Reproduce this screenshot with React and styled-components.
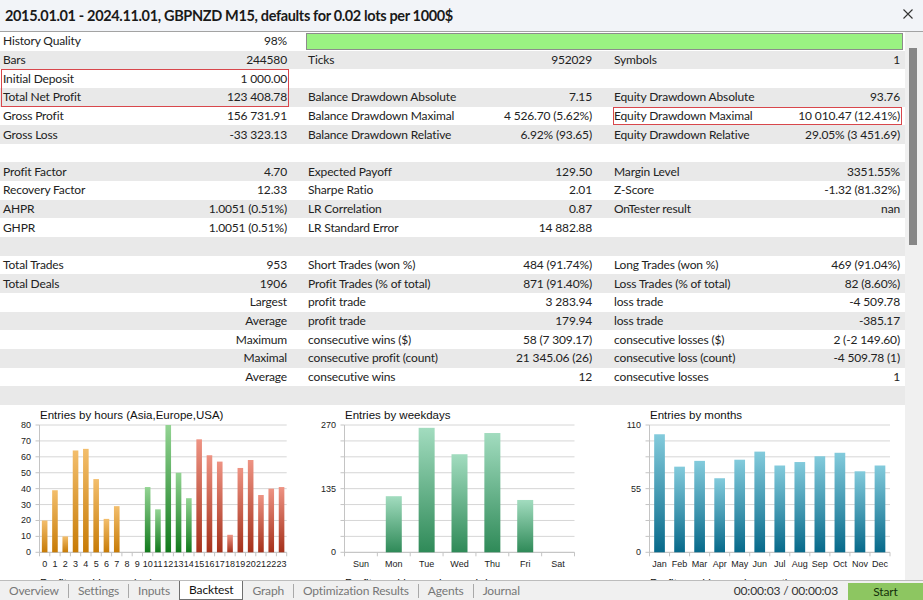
import React from 'react';
import styled, { createGlobalStyle } from 'styled-components';

const Global = createGlobalStyle`
  html, body { margin: 0; padding: 0; background: #fff; }
  body { width: 923px; height: 600px; overflow: hidden; font-family: Lato, "Noto Sans", sans-serif; }
  * { box-sizing: border-box; }
`;

const RED = '#d8474c';

const Window     = styled.div`
  width: 923px; height: 600px; display: flex; flex-direction: column;
  background: #fff; color: #222;
`;
const TitleBar   = styled.div`
  height: 32px; flex: none; display: flex; align-items: center; justify-content: space-between;
  padding: 0 10px 0 5px; background: #f2f4f8; border-bottom: 1px solid #a3a3a3;
`;
const Title      = styled.div`
  font: 700 14.5px Lato, "Noto Sans", sans-serif; color: #1a1a1a; letter-spacing: -0.35px;
`;
const Close      = styled.svg`width: 10px; height: 10px; margin-top: -3px;`;

const Body       = styled.div`flex: 1; display: flex; min-height: 0;`;
const Content    = styled.div`width: 905px; flex: none; overflow: hidden; display: flex; flex-direction: column;`;
const Scrollbar  = styled.div`
  width: 18px; flex: none; background: #f0f0f0; display: flex; flex-direction: column;
  padding: 16px 0 0 4px;
`;
const Thumb      = styled.div`width: 8px; height: 197px; background: #878787;`;

const Table      = styled.div`display: flex; flex-direction: column; flex: none;`;
const Row        = styled.div`
  height: 18.65px; display: flex; align-items: stretch; gap: 19px; padding-left: 1px;
  background: ${({ $stripe }) => ($stripe ? '#e9e9e9' : '#fff')};
  font-size: 12px; letter-spacing: -0.15px; line-height: 18px;
`;
const boxShadow = {
  top:    `inset 1px 0 0 ${RED}, inset -1px 0 0 ${RED}, inset 0 1px 0 ${RED}`,
  bottom: `inset 1px 0 0 ${RED}, inset -1px 0 0 ${RED}, inset 0 -1px 0 ${RED}`,
  all:    `inset 0 0 0 1px ${RED}`,
};
const Group      = styled.div`
  width: ${({ $w }) => $w}px; flex: none; display: flex; justify-content: space-between; align-items: center;
  padding: ${({ $pad }) => $pad};
  box-shadow: ${({ $box }) => ($box ? boxShadow[$box] : 'none')};
`;
const Label      = styled.span`white-space: nowrap;`;
const Value      = styled.span`white-space: nowrap; text-align: right;`;
const QualityBar = styled.div`
  flex: 1; margin: 1px 2px 1px -2px; background: #9af282; border: 1px solid #8c8c8c;
`;

const Charts     = styled.div`display: flex; flex-wrap: wrap; width: 905px; background: #fff; flex: none;`;
const ChartBox   = styled.div`width: ${({ $w }) => $w}px; padding-top: 4px; flex: none;`;
const ChartTitle = styled.div`
  height: 12px; line-height: 12px; padding-left: 40px; white-space: nowrap;
  font: 11.5px "Liberation Sans", Arial, sans-serif; color: #111;
`;
const ChartSvg   = styled.svg`display: block; overflow: visible;`;

const TabBar     = styled.div`
  height: 20px; flex: none; display: flex; align-items: stretch;
  background: #f0f0f0; border-top: 1px solid #bcbcbc; font-size: 12px; letter-spacing: -0.15px;
`;
const Tab        = styled.div`
  display: flex; align-items: center; padding: 0 9px 1px;
  color: ${({ $active }) => ($active ? '#111' : '#777')};
  background: ${({ $active }) => ($active ? '#fff' : 'transparent')};
  border: ${({ $active }) => ($active ? '1px solid #6f6f6f' : 'none')};
  border-top: none;
`;
const Sep        = styled.div`width: 1px; background: #a9a9a9; margin: 3px 0 2px;`;
const Spacer     = styled.div`flex: 1;`;
const Timer      = styled.div`display: flex; align-items: center; color: #333; margin-right: 10px;`;
const Start      = styled.div`
  width: 75px; margin-top: 2px; display: flex; align-items: center; justify-content: center;
  background: #8dc661; color: #14300a;
`;

const rows = [
  ['History Quality', '98%', 'BAR'],
  ['Bars', '244580', 'Ticks', '952029', 'Symbols', '1'],
  ['Initial Deposit', '1 000.00', '', '', '', '', 'top'],
  ['Total Net Profit', '123 408.78', 'Balance Drawdown Absolute', '7.15', 'Equity Drawdown Absolute', '93.76', 'bottom'],
  ['Gross Profit', '156 731.91', 'Balance Drawdown Maximal', '4 526.70 (5.62%)', 'Equity Drawdown Maximal', '10 010.47 (12.41%)', null, 'all'],
  ['Gross Loss', '-33 323.13', 'Balance Drawdown Relative', '6.92% (93.65)', 'Equity Drawdown Relative', '29.05% (3 451.69)'],
  [],
  ['Profit Factor', '4.70', 'Expected Payoff', '129.50', 'Margin Level', '3351.55%'],
  ['Recovery Factor', '12.33', 'Sharpe Ratio', '2.01', 'Z-Score', '-1.32 (81.32%)'],
  ['AHPR', '1.0051 (0.51%)', 'LR Correlation', '0.87', 'OnTester result', 'nan'],
  ['GHPR', '1.0051 (0.51%)', 'LR Standard Error', '14 882.88', '', ''],
  [],
  ['Total Trades', '953', 'Short Trades (won %)', '484 (91.74%)', 'Long Trades (won %)', '469 (91.04%)'],
  ['Total Deals', '1906', 'Profit Trades (% of total)', '871 (91.40%)', 'Loss Trades (% of total)', '82 (8.60%)'],
  ['', 'Largest', 'profit trade', '3 283.94', 'loss trade', '-4 509.78'],
  ['', 'Average', 'profit trade', '179.94', 'loss trade', '-385.17'],
  ['', 'Maximum', 'consecutive wins ($)', '58 (7 309.17)', 'consecutive losses ($)', '2 (-2 149.60)'],
  ['', 'Maximal', 'consecutive profit (count)', '21 345.06 (26)', 'consecutive loss (count)', '-4 509.78 (1)'],
  ['', 'Average', 'consecutive wins', '12', 'consecutive losses', '1'],
  [],
];

function StatRow({ r, i }) {
  const [l1 = '', v1 = '', l2 = '', v2 = '', l3 = '', v3 = '', box1, box3] = r;
  return (
    <Row $stripe={i % 2 === 1}>
      <Group $w={288} $pad="0 2px" $box={box1}>
        <Label>{l1}</Label><Value>{v1}</Value>
      </Group>
      {l2 === 'BAR' ? (
        <QualityBar />
      ) : (
        <>
          <Group $w={286} $pad="0 2px 0 0">
            <Label>{l2}</Label><Value>{v2}</Value>
          </Group>
          <Group $w={289} $pad="0 2px 0 1px" $box={box3}>
            <Label>{l3}</Label><Value>{v3}</Value>
          </Group>
        </>
      )}
    </Row>
  );
}

function BarChart({ id, plotW, data, max, yLabels, barW, grads }) {
  const left = 39.5;
  const top = 4;
  const h = 127.3;
  const bottom = top + h;
  const step = plotW / data.length;
  const y = v => bottom - (v / max) * h;
  const lines = Array.from({ length: 9 }, (_, k) => bottom - (k * h) / 8);
  return (
    <ChartSvg width={plotW + 50} height={152}>
      <defs>
        {Object.entries(grads).map(([k, [a, b]]) => (
          <linearGradient key={k} id={`${id}-${k}`} x1="0" y1="0" x2="0" y2="1">
            <stop offset="0" stopColor={a} />
            <stop offset="1" stopColor={b} />
          </linearGradient>
        ))}
      </defs>
      {lines.map((ly, k) => (
        <g key={k}>
          <line x1={left} x2={left + plotW} y1={ly} y2={ly} stroke={k === 0 ? '#b8b8b8' : '#d6d6d6'} />
          <line x1={left - 4} x2={left} y1={ly} y2={ly} stroke="#c4c4c4" />
        </g>
      ))}
      <line x1={left} x2={left} y1={top} y2={bottom + 4} stroke="#c4c4c4" />
      {data.map((d, k) => (
        <line key={`t${k}`} x1={left + (k + 1) * step} x2={left + (k + 1) * step} y1={bottom} y2={bottom + 4} stroke="#c4c4c4" />
      ))}
      {yLabels.map(v => (
        <text key={v} x={31} y={y(v) + 3} textAnchor="end" fontSize="9" fontFamily="Liberation Sans, Arial, sans-serif" fill="#222">{v}</text>
      ))}
      {data.map((d, k) => {
        const cx = left + (k + 0.5) * step;
        return (
          <g key={`b${k}`}>
            {d.v > 0 && (
              <rect x={cx - barW / 2} y={y(d.v)} width={barW} height={bottom - y(d.v)} fill={`url(#${id}-${d.g})`} />
            )}
            <text x={cx} y={145.5} textAnchor="middle" fontSize="9" fontFamily="Liberation Sans, Arial, sans-serif" fill="#222">{d.l}</text>
          </g>
        );
      })}
    </ChartSvg>
  );
}

const hours = [20, 39, 10, 64, 65, 46, 21, 29, 0, 0, 41, 27, 80, 50, 34, 71, 61, 57, 11, 53, 58, 36, 40, 41]
  .map((v, i) => ({ v, l: String(i), g: i < 10 ? 'a' : i < 15 ? 'e' : 'u' }));
const weekdays = [['Sun', 0], ['Mon', 119], ['Tue', 264], ['Wed', 208], ['Thu', 253], ['Fri', 111], ['Sat', 0]]
  .map(([l, v]) => ({ l, v, g: 'w' }));
const months = [['Jan', 102], ['Feb', 74], ['Mar', 79], ['Apr', 64], ['May', 80], ['Jun', 87], ['Jul', 75], ['Aug', 78], ['Sep', 83], ['Oct', 86], ['Nov', 70], ['Dec', 75]]
  .map(([l, v]) => ({ l, v, g: 'm' }));

const tabs = ['Overview', 'Settings', 'Inputs', 'Backtest', 'Graph', 'Optimization Results', 'Agents', 'Journal'];

export default function App() {
  return (
    <Window>
      <Global />
      <TitleBar>
        <Title>2015.01.01 - 2024.11.01, GBPNZD M15, defaults for 0.02 lots per 1000$</Title>
        <Close viewBox="0 0 10 10">
          <path d="M0.5 0.5 L9.5 9.5 M9.5 0.5 L0.5 9.5" stroke="#333" strokeWidth="1.1" />
        </Close>
      </TitleBar>
      <Body>
        <Content>
          <Table>
            {rows.map((r, i) => <StatRow key={i} r={r} i={i} />)}
          </Table>
          <Charts>
            <ChartBox $w={305}>
              <ChartTitle>Entries by hours (Asia,Europe,USA)</ChartTitle>
              <BarChart id="h" plotW={247.2} data={hours} max={80} barW={5.6}
                yLabels={[0, 10, 20, 30, 40, 50, 60, 70, 80]}
                grads={{ a: ['#f3be6c', '#c77b06'], e: ['#93d493', '#127a1c'], u: ['#ee9383', '#a5311b'] }} />
            </ChartBox>
            <ChartBox $w={305}>
              <ChartTitle>Entries by weekdays</ChartTitle>
              <BarChart id="w" plotW={230} data={weekdays} max={270} barW={16}
                yLabels={[0, 135, 270]} grads={{ w: ['#a2dcbf', '#2f8a58'] }} />
            </ChartBox>
            <ChartBox $w={295}>
              <ChartTitle>Entries by months</ChartTitle>
              <BarChart id="m" plotW={240.5} data={months} max={110} barW={10.7}
                yLabels={[0, 55, 110]} grads={{ m: ['#83cbdc', '#07698a'] }} />
            </ChartBox>
            <ChartBox $w={305}><ChartTitle>Profits and losses by hours</ChartTitle></ChartBox>
            <ChartBox $w={305}><ChartTitle>Profits and losses by weekdays</ChartTitle></ChartBox>
            <ChartBox $w={295}><ChartTitle>Profits and losses by months</ChartTitle></ChartBox>
          </Charts>
        </Content>
        <Scrollbar><Thumb /></Scrollbar>
      </Body>
      <TabBar>
        {tabs.map((t, i) => (
          <React.Fragment key={t}>
            <Tab $active={t === 'Backtest'}>{t}</Tab>
            {i < tabs.length - 1 && t !== 'Backtest' && tabs[i + 1] !== 'Backtest' && <Sep />}
          </React.Fragment>
        ))}
        <Spacer />
        <Timer>00:00:03 / 00:00:03</Timer>
        <Start>Start</Start>
      </TabBar>
    </Window>
  );
}
